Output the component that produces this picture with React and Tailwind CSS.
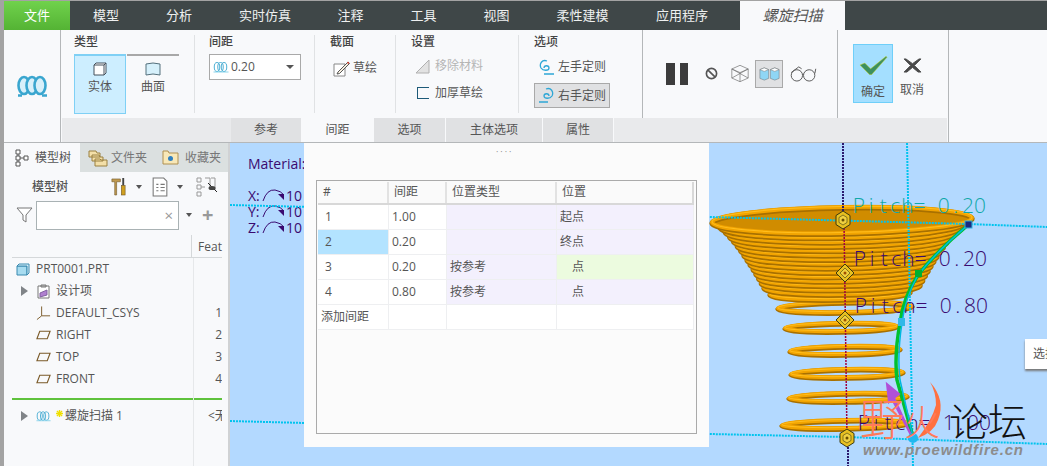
const topTabs = [
  ['模型', 'w-[72px]'],
  ['分析', 'w-[74px]'],
  ['实时仿真', 'w-[98px]'],
  ['注释', 'w-[73px]'],
  ['工具', 'w-[73px]'],
  ['视图', 'w-[73px]'],
  ['柔性建模', 'w-[99px]'],
  ['应用程序', 'w-[108px] pr-[8px]'],
];

const bottomTabs = [
  ['参考', 'w-[71px]', false],
  ['间距', 'w-[72px]', true],
  ['选项', 'w-[72px]', false],
  ['主体选项', 'w-[97px]', false],
  ['属性', 'w-[71px]', false],
];

const pitchRows = [
  { n: '1', v: '1.00', type: '', pos: '起点' },
  { n: '2', v: '0.20', type: '', pos: '终点', selected: true },
  { n: '3', v: '0.20', type: '按参考', pos: '点', indent: true, green: true },
  { n: '4', v: '0.80', type: '按参考', pos: '点', indent: true },
];

// 弹簧每圈: [中心x, 中心y, rx, ry]
const coneCoils = Array.from({ length: 15 }, (_, i) => {
  const t = i / 14;
  return [842, 220 + t * 66, 130 - Math.pow(t, 0.7) * 52, 13 - t * 5];
});
const lowCoils = [
  [845, 424, 63, 4],
  [848, 397, 59, 4],
  [847, 373, 56, 4],
  [845, 350, 55, 4],
  [841, 327, 56, 4],
  [845, 307, 67, 5],
  [840, 293, 70, 6],
];

function Coil({ c, fill = 'none' }) {
  const [cx, cy, rx, ry] = c;
  return (
    <g transform={`rotate(-1 ${cx} ${cy})`} fill="none">
      <ellipse cx={cx} cy={cy + 1} rx={rx} ry={ry} stroke="#a87000" strokeWidth="5.5" fill={fill} />
      <ellipse cx={cx} cy={cy} rx={rx} ry={ry} stroke="#f2a400" strokeWidth="4" />
      <ellipse cx={cx} cy={cy - 0.5} rx={rx} ry={ry} stroke="#ffbe1e" strokeWidth="1" />
    </g>
  );
}

function HelixIcon({ className }) {
  return (
    <svg viewBox="0 0 32 22" className={className} fill="none" stroke="#3aa6cf" strokeWidth="1.8">
      <ellipse cx="8" cy="10" rx="5.5" ry="9" />
      <ellipse cx="15" cy="10" rx="5.5" ry="9" />
      <ellipse cx="22" cy="10" rx="5.5" ry="9" />
      <path d="M1 20h30" stroke="#7fd0ea" />
    </svg>
  );
}

function Hex({ x, y }) {
  return (
    <g>
      <polygon points={`${x},${y - 9} ${x + 7},${y - 4.5} ${x + 7},${y + 4.5} ${x},${y + 9} ${x - 7},${y + 4.5} ${x - 7},${y - 4.5}`} fill="#e8c020" stroke="#3a3a10" />
      <polygon points={`${x},${y - 5} ${x + 4},${y - 2.5} ${x + 4},${y + 2.5} ${x},${y + 5} ${x - 4},${y + 2.5} ${x - 4},${y - 2.5}`} fill="#f0d040" stroke="#3a3a10" strokeWidth="0.6" />
      <circle cx={x} cy={y} r="1.5" fill="#6a5000" />
    </g>
  );
}

function Diamond({ x, y }) {
  return (
    <g>
      <polygon points={`${x},${y - 9} ${x + 9},${y} ${x},${y + 9} ${x - 9},${y}`} fill="#e8c020" stroke="#3a3a10" />
      <polygon points={`${x},${y - 5} ${x + 5},${y} ${x},${y + 5} ${x - 5},${y}`} fill="#f0d040" stroke="#3a3a10" strokeWidth="0.6" />
      <circle cx={x} cy={y} r="1.5" fill="#a05000" />
    </g>
  );
}

// 等宽排布每个字符, 模拟 Creo 的细线字体
function PitchText({ x, y, fill, children }) {
  const xs = [...children].map((_, i) => x + i * 12.1 + 5).join(' ');
  return (
    <text x={xs} y={y} fontSize="21" fontWeight="300" textAnchor="middle" fill={fill} className="font-['Open_Sans',sans-serif]">{children}</text>
  );
}

function Viewport() {
  return (
    <svg viewBox="230 143 817 323" className="block w-full h-full">
      <text x="248" y="169" fontSize="14" fill="#3a0a70" className="font-['Open_Sans',sans-serif]">Material:</text>
      {[['X:', 201], ['Y:', 217], ['Z:', 233]].map(([l, y]) => (
        <g key={l}>
          <text x="248" y={y} fontSize="14" fill="#3a0a70" className="font-['Open_Sans',sans-serif]">{l}</text>
          <path d={`M263 ${y} q4 -12 12 -11 q6 1 9 5`} fill="none" stroke="#3a0a70" />
          <path d={`M278 ${y - 7} l6 0 l0 6z`} fill="#3a0a70" />
          <text x="286" y={y} fontSize="14" fill="#3a0a70" className="font-['Open_Sans',sans-serif]">10</text>
        </g>
      ))}

      {lowCoils.map((c, i) => <Coil key={i} c={c} />)}
      {[...coneCoils].reverse().map((c, i) => <Coil key={i} c={c} fill="#d08c00" />)}

      <path d="M230 205 L710 217 L968 224 L1047 227" fill="none" stroke="#00c4ee" strokeWidth="2" strokeDasharray="2 1" />
      <path d="M230 421 L710 434 L845 437 L1047 444" fill="none" stroke="#00c4ee" strokeWidth="2" strokeDasharray="2 1" />
      <path d="M907 143 L913 466" fill="none" stroke="#00c4ee" strokeWidth="2" strokeDasharray="2 1" />
      <path d="M843 143 V218" fill="none" stroke="#2a1a70" strokeWidth="2" strokeDasharray="2 1" />
      <path d="M844 222 L847 437" fill="none" stroke="#a00040" strokeWidth="1.5" strokeDasharray="2 1" />
      <path d="M848 444 V466" fill="none" stroke="#2a1a70" strokeWidth="2" strokeDasharray="2 1" />

      <PitchText x={854} y={213} fill="#10a8a8">Pitch= 0.20</PitchText>
      <PitchText x={855} y={266} fill="#3a0a70">Pitch= 0.20</PitchText>
      <PitchText x={856} y={313} fill="#3a0a70">Pitch= 0.80</PitchText>
      <PitchText x={859} y={430} fill="#3a0a70">Pitch= 1.00</PitchText>

      <path d="M968 225 Q938 250 918 275 Q903 298 900 323 Q894 355 897 380 L913 437" fill="none" stroke="#00c030" strokeWidth="3.5" />
      <path d="M968 225 Q938 250 918 275 Q905 298 902 323 Q897 355 900 380 L913 437" fill="none" stroke="#00b8e0" strokeWidth="1.5" />
      <rect x="915" y="270" width="7" height="7" fill="#00b030" />
      <rect x="965" y="221" width="7" height="7" fill="#1a2a80" stroke="#30b0e0" />
      <rect x="898" y="318" width="7" height="8" fill="#30b8e8" />

      <Hex x={843} y={220} />
      <Diamond x={845} y={273} />
      <Diamond x={845} y={320} />
      <Hex x={847} y={438} />

      <path d="M912 437 L894 398 L899 394 L887 384 L889 402 L892 399 Z" fill="#b050d8" stroke="#b050d8" strokeWidth="2" />
      <path d="M930 382 Q946 400 938 420 Q934 432 918 438 Q932 420 936 405 Q936 392 930 382Z" fill="#ff7040" />
      <circle cx="913" cy="438" r="5" fill="#20b8f0" />
      <text x="860" y="436" fontSize="44" fill="#ff7a5a" fontWeight="300" className="font-['Noto_Sans_CJK_SC',sans-serif]">野</text>
      <text x="904" y="436" fontSize="36" fill="#ff7a5a" fontWeight="300" className="font-['Noto_Sans_CJK_SC',sans-serif]">火</text>
      <text x="949" y="436" fontSize="39" fill="#111" fontWeight="300" className="font-['Noto_Sans_CJK_SC',sans-serif]">论坛</text>
      <text x="863" y="455" fontSize="15" fontStyle="italic" fontWeight="700" fill="#8c8c8c" textLength="160" className="font-['Liberation_Sans',sans-serif]">www.proewildfire.cn</text>
    </svg>
  );
}

function TreeRow({ icon, label, num, arrow, clip }) {
  return (
    <div className="flex h-[22px] items-center">
      <div className="flex w-[189px] items-center">
        <span className="flex h-[10px] w-[32px] items-center pl-[17px]">
          {arrow && <span className="h-0 w-0 border-y-[5px] border-l-[7px] border-y-transparent border-l-[#808488]" />}
        </span>
        {icon}
        <span className="ml-[5px] text-[12px] whitespace-nowrap">{label}</span>
      </div>
      <span className={`w-[29px] overflow-hidden text-[12px] whitespace-nowrap ${clip ? 'pl-[15px] text-left' : 'text-right'}`}>{num}</span>
    </div>
  );
}

function PlaneIcon() {
  return (
    <svg viewBox="0 0 16 10" className="h-[10px] w-[15px]" fill="none" stroke="#7a5a28" strokeWidth="1.2">
      <path d="M4 1h11l-3 8H1z" />
    </svg>
  );
}

function Group({ title, w, pl, last, children }) {
  return (
    <div className={`${w} ${pl} my-[5px] h-[78px] ${last ? '' : 'border-r border-[#e0e2e4]'}`}>
      <div className="-mt-[2px] text-[12px] font-medium leading-[18px] text-[#444]">{title}</div>
      {children}
    </div>
  );
}

function Ribbon() {
  return (
    <div className="flex h-[112px] box-content border-b border-[#b4b7b9] bg-[#f8f9fb]">
      <div className="flex w-[56px] items-center justify-center">
        <svg viewBox="0 0 32 22" className="h-[23px] w-[32px]" fill="#d8f0fa" stroke="#3aa6cf" strokeWidth="2.6">
          <ellipse cx="8" cy="10" rx="5.5" ry="8.5" />
          <ellipse cx="16" cy="10" rx="5.5" ry="8.5" />
          <ellipse cx="24" cy="10" rx="5.5" ry="8.5" />
          <path d="M2 20h4M26 20h5" />
        </svg>
      </div>
      <div className="flex w-[889px] flex-col border-x border-[#b4b7b9]">
        <div className="flex h-[88px]">
          <Group title="类型" w="w-[134px]" pl="pl-[13px]">
            <div className="mt-[3px] flex gap-[1px]">
              <div className="flex h-[60px] w-[52px] flex-col items-center border border-t-[2px] border-[#7fd0f5] bg-[#cdeeff] pt-[6px] text-[12px]">
                <svg viewBox="0 0 14 14" className="h-[14px] w-[14px]" fill="#fff" stroke="#44505c"><path d="M1 3h10v10H1zM1 3l2-2h10v10l-2 2M11 3l2-2" /></svg>
                <span className="mt-[2px]">实体</span>
              </div>
              <div className="flex h-[60px] w-[52px] flex-col items-center border-t-[2px] border-[#a8a8a8] pt-[6px] text-[12px]">
                <svg viewBox="0 0 16 14" className="h-[14px] w-[16px]" fill="#d6f0fb" stroke="#55707c"><path d="M1 2q7-2 14 0v11q-7-2-14 0z" /></svg>
                <span className="mt-[2px]">曲面</span>
              </div>
            </div>
          </Group>
          <Group title="间距" w="w-[120px]" pl="pl-[14px]">
            <div className="mt-[3px] flex h-[26px] w-[92px] items-center border border-[#a9a9a9] bg-white pl-[3px]">
              <HelixIcon className="h-[11px] w-[16px]" />
              <span className="ml-[2px] text-[12px]">0.20</span>
              <span className="ml-auto mr-[6px] h-0 w-0 border-x-[4px] border-t-[4px] border-x-transparent border-t-[#555]" />
            </div>
          </Group>
          <Group title="截面" w="w-[81px]" pl="pl-[15px]">
            <div className="mt-[8px] flex items-center pl-[3px] text-[12px]">
              <svg viewBox="0 0 17 17" className="h-[17px] w-[17px]" fill="none">
                <path d="M1 4h11v12H1z" fill="#fff" stroke="#888" />
                <path d="M5 12L15 2l1.500 1.500L6.500 13.500 4 14z" fill="#f8f0e0" stroke="#555" />
                <path d="M14 3l1-1.500 1.500 1.500-1 1z" fill="#d04030" />
              </svg>
              <span className="ml-[3px]">草绘</span>
            </div>
          </Group>
          <Group title="设置" w="w-[123px]" pl="pl-[15px]">
            <div className="mt-[6px] flex items-center pl-[4px] text-[12px] text-[#b5b5b5]">
              <svg viewBox="0 0 15 15" className="h-[15px] w-[15px]"><path d="M1 14L14 1v13z" fill="#e2e2e2" stroke="#b0b0b0" /></svg>
              <span className="ml-[5px]">移除材料</span>
            </div>
            <div className="mt-[9px] flex items-center pl-[6px] text-[12px]">
              <span className="h-[12px] w-[12px] border-y border-l border-[#1d5a78]" />
              <span className="ml-[6px]">加厚草绘</span>
            </div>
          </Group>
          <Group title="选项" w="w-[123px]" pl="pl-[15px]" last>
            <div className="mt-[6px] flex h-[20px] items-center pl-[4px] text-[12px]">
              <svg viewBox="0 0 17 17" className="h-[17px] w-[17px]" fill="none" stroke="#2ea7d6" strokeWidth="1.3">
                <path d="M9 2C4 0 1 5 3 9c2 3 8 3 8 0 0-3-5-3-5 0M6 15h10" />
              </svg>
              <span className="ml-[3px]">左手定则</span>
            </div>
            <div className="mt-[6px] flex h-[25px] w-[76px] items-center border border-[#a9a9a9] bg-[#e0e1e3] pl-[3px] text-[12px]">
              <svg viewBox="0 0 17 17" className="h-[17px] w-[17px]" fill="none" stroke="#2ea7d6" strokeWidth="1.3">
                <path d="M8 2c5-2 8 3 6 7-2 3-8 3-8 0 0-3 5-3 5 0M1 15h9" />
              </svg>
              <span className="ml-[3px]">右手定则</span>
            </div>
          </Group>
          <div className="flex w-[196px] items-start border-x border-[#b4b7b9] pl-[23px] pt-[33px]">
            <span className="h-[22px] w-[9px] bg-[#3c3c3c]" />
            <span className="ml-[5px] h-[22px] w-[8px] bg-[#3c3c3c]" />
            <svg viewBox="0 0 14 14" className="ml-[17px] mt-[4px] h-[13px] w-[13px]" fill="none" stroke="#555" strokeWidth="1.800">
              <circle cx="7" cy="7" r="5.500" />
              <path d="M3 3l8 8" />
            </svg>
            <svg viewBox="0 0 22 20" className="ml-[12px] mt-[1px] h-[19px] w-[20px]" fill="none" stroke="#777" strokeWidth="0.800">
              <path d="M2 5l9-4 9 4v10l-9 4-9-4zM2 5l9 4 9-4M11 9v10M2 15l18-10M2 5l18 10" />
            </svg>
            <div className="ml-[5px] -mt-[3px] flex h-[28px] w-[28px] items-center justify-center border border-[#a9a9a9] bg-[#e0e1e3]">
              <svg viewBox="0 0 24 16" className="h-[14px] w-[23px]" stroke="#666" strokeWidth="0.500">
                <path d="M1 3l5-2 5 2v10l-5 2-5-2z" fill="#8fd6f5" />
                <path d="M1 3l5 2 5-2-5-2z" fill="#fff" />
                <path d="M13 3l5-2 5 2v10l-5 2-5-2z" fill="#8fd6f5" />
                <path d="M13 3l5 2 5-2-5-2z" fill="#fff" />
              </svg>
            </div>
            <svg viewBox="0 0 28 18" className="ml-[7px] mt-[2px] h-[17px] w-[27px]" fill="none" stroke="#555">
              <circle cx="7" cy="11" r="6" />
              <circle cx="20" cy="11" r="6" />
              <path d="M13 10q1-1 1 0M1 8l8-6 3 2M26 9l1-5" />
            </svg>
          </div>
          <div className="flex flex-1 items-start pl-[15px] pt-[14px]">
            <div className="flex h-[59px] w-[40px] flex-col items-center border border-[#6fcff9] bg-[#a4dfff] pt-[10px] text-[12px]">
              <svg viewBox="0 0 30 20" className="h-[20px] w-[29px]">
                <path d="M1 10l5-2 6 6L28 1l1 1-16 18h-2z" fill="#3c9060" stroke="#d8d820" strokeWidth="0.500" />
              </svg>
              <span className="mt-[8px]">确定</span>
            </div>
            <div className="ml-[6px] flex w-[26px] flex-col items-center pt-[14px] text-[12px]">
              <svg viewBox="0 0 20 16" className="h-[15px] w-[19px]"><path d="M3 1l7 5 7-5h2l-7 7 7 7h-3l-6-5-6 5H1l7-7-7-7z" fill="#4a4a4a" stroke="#4a4a4a" /></svg>
              <span className="mt-[8px]">取消</span>
            </div>
          </div>
        </div>
        <div className="ml-[1px] flex h-[24px] w-[885px] bg-[#e9eaec] pl-[169px]">
          {bottomTabs.map(([t, w, active]) => (
            <div key={t} className={`${w} flex items-center justify-center border-r border-[#f8f9fb] text-[12px] ${active ? 'bg-[#f8f9fb]' : 'bg-[#e0e1e3]'}`}>{t}</div>
          ))}
        </div>
      </div>
    </div>
  );
}

function ModelTree() {
  return (
    <div className="flex w-[224px] flex-col bg-[#f8f9fb]">
      <div className="flex h-[29px] bg-[#dbe0e0] text-[12px]">
        <div className="flex w-[76px] items-center bg-[#f8f9fb] pl-[11px]">
          <svg viewBox="0 0 14 18" className="h-[18px] w-[14px]" fill="#fff" stroke="#555"><path d="M1 1h4v4H1zM1 7h4v4H1zM1 13h4v4H1zM9 7h4v4H9zM5 9h4M3 5v2M3 11v2" /></svg>
          <span className="ml-[6px] whitespace-nowrap">模型树</span>
        </div>
        <div className="flex w-[74px] items-center overflow-hidden pl-[8px]">
          <svg viewBox="0 0 20 18" className="h-[18px] w-[20px] shrink-0" fill="#f3dfa8" stroke="#9a8040"><path d="M1 2h7l1 2h3v4H1zM4 6h7l1 2h3v4H4zM7 10h5l1 1h6v6H7z" /></svg>
          <span className="ml-[3px] whitespace-nowrap text-[#777]">文件夹</span>
        </div>
        <div className="flex w-[74px] items-center overflow-hidden pl-[8px]">
          <svg viewBox="0 0 17 15" className="h-[15px] w-[17px] shrink-0"><path d="M1 1h5l1 2h9v11H1z" fill="#f8e8b8" stroke="#b09050" /><circle cx="8.500" cy="8.500" r="2.500" fill="#3080c0" /></svg>
          <span className="ml-[6px] whitespace-nowrap text-[#777]">收藏夹</span>
        </div>
      </div>
      <div className="flex h-[29px] items-center pl-[28px] text-[12px] font-medium">
        <span className="whitespace-nowrap text-[#555]">模型树</span>
        <svg viewBox="0 0 18 20" className="ml-[42px] h-[21px] w-[17px]">
          <path d="M2 2h9v3H7v14H5V5H2z" fill="#c09a50" stroke="#6a5020" strokeWidth="0.600" />
          <rect x="13" y="1" width="2" height="8" fill="#444" />
          <rect x="12" y="9" width="4" height="10" fill="#d0a020" stroke="#6a5020" strokeWidth="0.600" />
        </svg>
        <span className="ml-[9px] h-0 w-0 border-x-[3.500px] border-t-[4px] border-x-transparent border-t-[#555]" />
        <svg viewBox="0 0 15 19" className="ml-[10px] h-[20px] w-[16px]" fill="#fff" stroke="#777"><path d="M1 1h10l3 3v14H1zM4 7h2M8 7h4M4 10h2M8 10h4M4 13h2M8 13h4" /></svg>
        <span className="ml-[9px] h-0 w-0 border-x-[3.500px] border-t-[4px] border-x-transparent border-t-[#555]" />
        <svg viewBox="0 0 22 20" className="ml-[13px] h-[20px] w-[22px]" fill="none" stroke="#999"><path d="M1 1h4v4H1zM1 8h4v4H1zM1 15h4v4H1zM5 10h4M9 1h5v12M15 1h4v12" /><path d="M12 6l9 9" stroke="#222" /><ellipse cx="16" cy="11" rx="3.500" ry="2" fill="#444" stroke="none" /></svg>
      </div>
      <div className="flex h-[28px] items-center pl-[12px]">
        <svg viewBox="0 0 17 16" className="h-[16px] w-[17px]" fill="#fff" stroke="#777"><path d="M1 1h15l-6 7v7l-3-2V8z" /></svg>
        <div className="ml-[3px] flex h-[29px] w-[143px] items-center justify-end border border-[#a9b2b4] bg-white pr-[5px] text-[15px] leading-none text-[#999]">×</div>
        <span className="ml-[7px] h-0 w-0 border-x-[3.500px] border-t-[4px] border-x-transparent border-t-[#555]" />
        <span className="ml-[10px] text-[20px] font-bold leading-none text-[#999]">+</span>
      </div>
      <div className="ml-[8px] mt-[6px] flex h-[23px] w-[210px] border-b border-[#d5d8da]">
        <div className="w-[181px] border-r border-[#d5d8da]" />
        <span className="pl-[6px] pt-[3px] text-[12px]">Feat</span>
      </div>
      <div className="relative text-[#555]">
        <TreeRow label="PRT0001.PRT" num="" icon={
          <svg viewBox="0 0 14 13" className="-ml-[20px] mr-[1px] h-[13px] w-[14px]"><path d="M1 3h10v9H1z" fill="#a8dcf0" stroke="#3a8ab0" /><path d="M1 3l2-2h10v9l-2 2V3z" fill="#d8f0fa" stroke="#3a8ab0" /></svg>
        } />
        <TreeRow arrow label="设计项" num="" icon={
          <svg viewBox="0 0 15 15" className="h-[15px] w-[15px]" fill="#fff" stroke="#777"><path d="M2 2h11v12H2zM5 1h5v2H5z" /><path d="M4 9l7-3v5l-7 2z" fill="#b080d0" stroke="#8060a0" /></svg>
        } />
        <TreeRow label="DEFAULT_CSYS" num="1" icon={
          <svg viewBox="0 0 16 16" className="h-[16px] w-[15px]" fill="none" stroke="#7a5a28"><path d="M6 1v10L1 15M6 11h9" /></svg>
        } />
        <TreeRow label="RIGHT" num="2" icon={<PlaneIcon />} />
        <TreeRow label="TOP" num="3" icon={<PlaneIcon />} />
        <TreeRow label="FRONT" num="4" icon={<PlaneIcon />} />
        <div className="ml-[8px] mt-[8px] h-[2px] w-[210px] bg-[#5fc23c]" />
        <div className="mt-[5px]">
          <TreeRow arrow clip num="<无" icon={<HelixIcon className="h-[11px] w-[15px]" />} label={
            <span className="flex items-center">
              <svg viewBox="0 0 8 8" className="mb-[6px] mr-[2px] h-[7px] w-[7px]" stroke="#f0e000" strokeWidth="1.6"><path d="M4 0v8M0 4h8M1 1l6 6M7 1l-6 6" /></svg>
              螺旋扫描 1
            </span>
          } />
        </div>
        <div className="absolute -bottom-[60px] left-[189px] top-0 w-px bg-[#e6e8ea]" />
      </div>
    </div>
  );
}

function PitchTable() {
  const cell = 'border-r border-b border-[#eeeff1]';
  return (
    <div className="mx-[12px] mt-[37px] h-[254px] border border-[#aaa] pl-[1px] pr-[2px] text-[12px]">
      <div className="flex h-[24px] border-b-2 border-[#d8d8d8] bg-[#fafafa] pt-[1px]">
        <div className="w-[71px] border-r-2 border-[#e2e2e2] pl-[5px] leading-[20px]">#</div>
        <div className="w-[58px] border-r-2 border-[#e2e2e2] pl-[5px] leading-[20px]">间距</div>
        <div className="w-[110px] border-r-2 border-[#e2e2e2] pl-[5px] leading-[20px]">位置类型</div>
        <div className="flex-1 border-r-2 border-[#d8d8d8] pl-[5px] leading-[20px]">位置</div>
      </div>
      {pitchRows.map((r) => (
        <div key={r.n} className="flex h-[25px] items-center">
          <div className={`${cell} h-full w-[71px] pl-[7px] leading-[24px] ${r.selected ? 'bg-[#b3e3ff]' : 'bg-white'}`}>{r.n}</div>
          <div className={`${cell} h-full w-[58px] bg-white pl-[3px] leading-[24px]`}>{r.v}</div>
          <div className={`${cell} h-full w-[110px] bg-[#f3f0fd] pl-[3px] leading-[24px]`}>{r.type}</div>
          <div className={`${cell} h-full flex-1 leading-[24px] ${r.indent ? 'pl-[15px]' : 'pl-[3px]'} ${r.green ? 'bg-[#ecfbdf]' : 'bg-[#f3f0fd]'}`}>{r.pos}</div>
        </div>
      ))}
      <div className="flex h-[25px]">
        <div className={`${cell} w-[71px] bg-white pl-[3px] leading-[24px]`}>添加间距</div>
        <div className={`${cell} w-[58px] bg-white`} />
        <div className={`${cell} w-[110px] bg-white`} />
        <div className={`${cell} flex-1 bg-white`} />
      </div>
    </div>
  );
}

export default function App() {
  return (
    <div className="flex h-[466px] w-[1047px] overflow-hidden bg-[#a3a3a3] font-['Open_Sans','Noto_Sans_CJK_SC',sans-serif] text-[#555]">
      <div className="w-[4px] shrink-0" />
      <div className="flex w-[1043px] flex-col">
        <div className="mt-[1px] flex h-[29px] bg-[#3f4748] text-[13px] text-[#eef0f0]">
          <div className="flex w-[66px] items-center justify-center bg-gradient-to-b from-[#70d24c] to-[#54b334] text-white">文件</div>
          {topTabs.map(([t, w]) => (
            <div key={t} className={`${w} flex items-center justify-center`}>{t}</div>
          ))}
          <div className="flex w-[105px] items-center justify-center bg-[#f8f9fb] text-[15px] italic text-[#555]">螺旋扫描</div>
        </div>
        <Ribbon />
        <div className="flex min-h-0 flex-1">
          <ModelTree />
          <div className="w-[2px] bg-[#d0d2d4]" />
          <div className="relative flex-1 bg-[#b3d9ff]">
            <Viewport />
            <div className="absolute left-[74px] top-0 h-[304px] w-[405px] bg-[#fbfbfb]">
              <div className="absolute left-[192px] top-[4px] text-[9px] leading-none tracking-[2px] text-[#888]">····</div>
              <PitchTable />
            </div>
            <div className="absolute left-[795px] top-[196px] h-[30px] w-[30px] overflow-hidden bg-white pl-[8px] text-[12px] leading-[30px] whitespace-nowrap shadow-[0_2px_2px_#777]">选择</div>
          </div>
        </div>
      </div>
    </div>
  );
}
